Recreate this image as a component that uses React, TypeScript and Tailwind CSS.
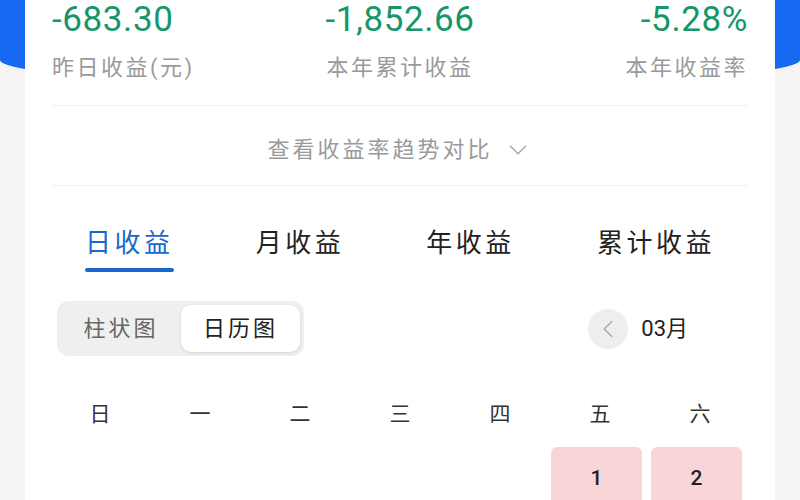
import { ChevronDown, ChevronLeft } from 'lucide-react'

const stats = [
  { value: '-683.30', label: '昨日收益(元)', align: 'items-start' },
  { value: '-1,852.66', label: '本年累计收益', align: 'items-center' },
  { value: '-5.28%', label: '本年收益率', align: 'items-end' },
]

const tabs = ['日收益', '月收益', '年收益', '累计收益']
const weekdays = ['日', '一', '二', '三', '四', '五', '六']

export default function App() {
  return (
    <div className="relative w-[800px] h-[500px] overflow-hidden bg-[#f4f4f4] font-['Roboto','Noto_Sans_CJK_SC',sans-serif]">
      {/* Blue header behind the card */}
      <div className="absolute left-0 right-0 top-0 h-[86px] bg-[#1769f2] rounded-b-[50%_26px]" />

      <div className="relative mx-[25px] h-[500px] bg-white px-[27px]">
        {/* Summary numbers */}
        <div className="grid grid-cols-3 pt-[2px]">
          {stats.map(s => (
            <div key={s.label} className={`flex flex-col ${s.align}`}>
              <div className="h-[36px] leading-[36px] text-[35px] tracking-[0.6px] text-[#17966a]">
                {s.value}
              </div>
              <div className="mt-[16px] h-[28px] leading-[28px] text-[22px] tracking-[2.5px] text-[#9a9a9a]">
                {s.label}
              </div>
            </div>
          ))}
        </div>

        <div className="mt-[23px] h-px bg-[#f0f0f0]" />

        {/* Trend toggle */}
        <div className="flex h-[79px] items-center justify-center pt-[8px]">
          <span className="h-[28px] leading-[28px] text-[22px] tracking-[3px] text-[#9a9a9a]">
            查看收益率趋势对比
          </span>
          <ChevronDown className="ml-[10px] w-[30px] h-[30px] text-[#a8a8a8]" strokeWidth={1.2} />
        </div>

        <div className="h-px bg-[#f0f0f0]" />

        {/* Tabs */}
        <div className="flex justify-between px-[33px] pt-[40px]">
          {tabs.map((t, i) => (
            <div key={t} className="flex flex-col items-start">
              <span
                className={`h-[34px] leading-[34px] text-[26px] tracking-[3.5px] ${
                  i === 0 ? 'text-[#1b67d0]' : 'text-[#222222]'
                }`}
              >
                {t}
              </span>
              <div
                className={`mt-[8px] h-[4px] w-full rounded-full ${i === 0 ? 'bg-[#1b67d0]' : 'bg-transparent'}`}
              />
            </div>
          ))}
        </div>

        {/* Chart mode + month */}
        <div className="mt-[29px] flex items-center justify-between pl-[5px]">
          <div className="flex items-center rounded-[12px] bg-[#efefef] p-[4px]">
            <div className="w-[120px] h-[47px] flex items-center justify-center text-[22px] tracking-[3px] text-[#666666]">
              柱状图
            </div>
            <div className="w-[119px] h-[47px] flex items-center justify-center rounded-[10px] bg-white shadow-[0_1px_3px_rgba(0,0,0,0.12)] text-[22px] tracking-[3px] text-[#222222]">
              日历图
            </div>
          </div>

          <div className="flex items-center pr-[60px]">
            <div className="w-[40px] h-[40px] rounded-full bg-[#eeeeee] flex items-center justify-center">
              <ChevronLeft className="w-[30px] h-[30px] text-[#aaaaaa]" strokeWidth={1.2} />
            </div>
            <span className="ml-[13px] text-[22px] text-[#222222]">03月</span>
          </div>
        </div>

        {/* Weekdays */}
        <div className="mt-[44px] grid grid-cols-7 -mx-[2px]">
          {weekdays.map(d => (
            <div key={d} className="h-[28px] leading-[28px] text-center text-[21px] text-[#333333]">
              {d}
            </div>
          ))}
        </div>

        {/* Calendar cells */}
        <div className="mt-[19px] grid grid-cols-[repeat(7,91px)] gap-[9px] -ml-[1px]">
          {Array.from({ length: 5 }).map((_, i) => (
            <div key={`e${i}`} className="h-[72px]" />
          ))}
          {[1, 2].map(n => (
            <div key={n} className="h-[72px] rounded-[6px] bg-[#f8d6d8] flex flex-col items-center pt-[18px]">
              <span className="text-[21px] font-medium leading-[26px] text-[#1f1f1f]">{n}</span>
            </div>
          ))}
        </div>
      </div>
    </div>
  )
}
